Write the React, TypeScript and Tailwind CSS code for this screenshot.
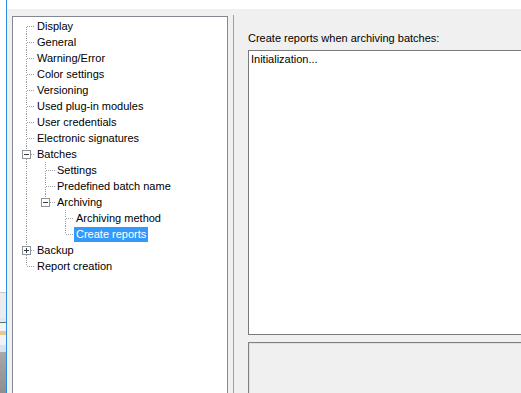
import React from "react";

type Item = {
  label: string;
  depth: number;
  hasNext: boolean;
  anc: boolean[];
  exp?: "-" | "+";
  first?: boolean;
  selected?: boolean;
};

const items: Item[] = [
  { label: "Display", depth: 0, hasNext: true, anc: [], first: true },
  { label: "General", depth: 0, hasNext: true, anc: [] },
  { label: "Warning/Error", depth: 0, hasNext: true, anc: [] },
  { label: "Color settings", depth: 0, hasNext: true, anc: [] },
  { label: "Versioning", depth: 0, hasNext: true, anc: [] },
  { label: "Used plug-in modules", depth: 0, hasNext: true, anc: [] },
  { label: "User credentials", depth: 0, hasNext: true, anc: [] },
  { label: "Electronic signatures", depth: 0, hasNext: true, anc: [] },
  { label: "Batches", depth: 0, hasNext: true, anc: [], exp: "-" },
  { label: "Settings", depth: 1, hasNext: true, anc: [true] },
  { label: "Predefined batch name", depth: 1, hasNext: true, anc: [true] },
  { label: "Archiving", depth: 1, hasNext: false, anc: [true], exp: "-" },
  { label: "Archiving method", depth: 2, hasNext: true, anc: [true, false] },
  { label: "Create reports", depth: 2, hasNext: false, anc: [true, false], selected: true },
  { label: "Backup", depth: 0, hasNext: true, anc: [], exp: "+" },
  { label: "Report creation", depth: 0, hasNext: false, anc: [] },
];

// column widths and line offsets
const colW = [18, 20, 19];
const lineX = [9, 10, 10];
const LC = "#a0a0a0";

function Cell({
  col,
  top,
  bottom,
  horiz,
  exp,
}: {
  col: number;
  top: boolean;
  bottom: boolean;
  horiz: boolean;
  exp?: "-" | "+";
}) {
  const w = colW[col];
  const lx = lineX[col];
  const x = lx + 0.5;
  return (
    <svg width={w} height={16} className="shrink-0 block" shapeRendering="crispEdges">
      {top && <line x1={x} y1={0} x2={x} y2={8} stroke={LC} strokeDasharray="1 1" />}
      {bottom && <line x1={x} y1={9} x2={x} y2={16} stroke={LC} strokeDasharray="1 1" />}
      {horiz && (
        <line x1={exp ? lx + 5 : lx + 1} y1={8.5} x2={w} y2={8.5} stroke={LC} strokeDasharray="1 1" />
      )}
      {exp && (
        <g>
          <rect x={lx - 4 + 0.5} y={4.5} width={8} height={8} fill="#ffffff" stroke="#919191" />
          <line x1={lx - 2} y1={8.5} x2={lx + 3} y2={8.5} stroke="#2d3f55" />
          {exp === "+" && <line x1={x} y1={6} x2={x} y2={11} stroke="#2d3f55" />}
        </g>
      )}
    </svg>
  );
}

function Row({ it }: { it: Item }) {
  const cells: React.ReactNode[] = [];
  for (let c = 0; c < it.depth; c++) {
    cells.push(<Cell key={c} col={c} top={it.anc[c]} bottom={it.anc[c]} horiz={false} />);
  }
  cells.push(
    <Cell
      key="own"
      col={it.depth}
      top={!it.first}
      bottom={it.hasNext}
      horiz={true}
      exp={it.exp}
    />
  );
  return (
    <div className="flex h-4 items-center">
      {cells}
      <span
        className={
          it.selected
            ? "h-[15px] px-[2px] leading-[15px] bg-[#3399ff] text-white whitespace-nowrap"
            : "h-[15px] px-[2px] leading-[15px] text-black whitespace-nowrap"
        }
      >
        {it.label}
      </span>
    </div>
  );
}

export default function App() {
  return (
    <div
      className="w-[521px] h-[393px] flex overflow-hidden bg-[#f0f0f0] text-[11px] text-black"
      style={{ fontFamily: '"Liberation Sans", Arial, sans-serif' }}
    >
      {/* left edge: background window */}
      <div className="w-[6px] shrink-0 flex flex-col">
        <div className="h-[292px] bg-white" />
        <div className="h-px bg-[#c8c8c8]" />
        <div className="h-[25px] bg-[#ececec]" />
        <div className="h-[4px] bg-[#dce8f4]" />
        <div className="h-px bg-[#6a6a6a]" />
        <div className="h-[8px] bg-[#f2f2f2]" />
        <div className="h-[4px] bg-[#e6c98a]" />
        <div className="h-[10px] bg-[#f2f2f2]" />
        <div className="h-[7px] bg-[#d6e3f0]" />
        <div className="flex-1 bg-gradient-to-b from-[#a8a8a8] to-[#8e8e8e]" />
      </div>
      <div className="w-px shrink-0 bg-[#2b8ae4]" />

      {/* dialog */}
      <div className="flex-1 flex flex-col min-w-0">
        <div className="h-[9px] shrink-0 bg-white" />
        <div className="flex-1 flex pl-[5px] pt-[7px] min-h-0">
          {/* tree */}
          <div className="w-[216px] shrink-0 border border-b-0 border-[#828790] bg-white pl-[4px] pt-px">
            {items.map((it, i) => (
              <Row key={i} it={it} />
            ))}
          </div>

          <div className="ml-[5px] w-px shrink-0 bg-[#a0a0a0] -mt-px" />

          {/* right panel */}
          <div className="flex-1 flex flex-col pl-[14px] min-w-0">
            <div className="mt-[16px] h-[13px] leading-[13px] whitespace-nowrap">
              Create reports when archiving batches:
            </div>
            <div className="mt-[5px] h-[285px] w-[300px] shrink-0 border border-[#7a7a7a] bg-white pl-[2px] pt-[2px]">
              <div className="leading-[13px]">Initialization...</div>
            </div>
            <div className="mt-[7px] flex-1 w-[300px] border-l border-t border-[#808080] bg-[#f0f0f0] shadow-[inset_1px_1px_0_#e0e0e0]" />
          </div>
        </div>
      </div>
    </div>
  );
}
